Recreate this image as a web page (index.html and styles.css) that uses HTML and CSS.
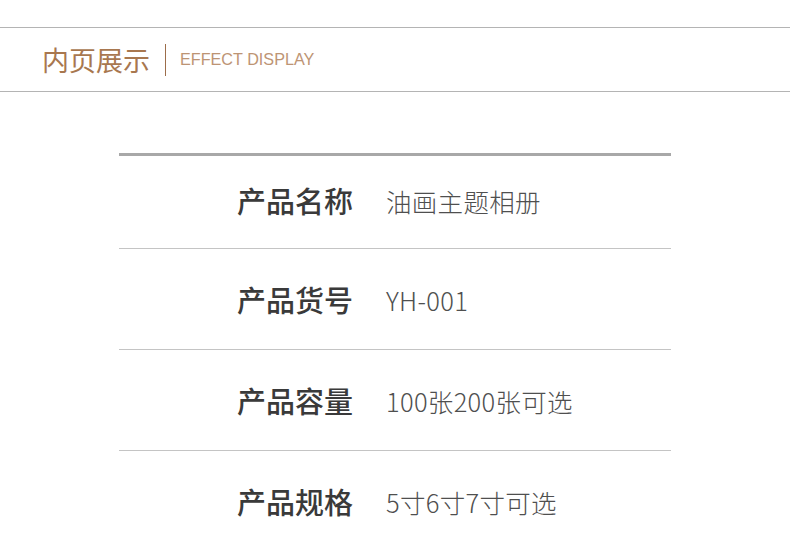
FILE: index.html
```html
<!DOCTYPE html>
<html lang="zh">
<head>
<meta charset="utf-8">
<link rel="stylesheet" href="styles.css">
</head>
<body>
<header class="section-head">
  <h2 class="title-cn">内页展示</h2>
  <span class="divider"></span>
  <span class="title-en">EFFECT DISPLAY</span>
</header>
<div class="spec">
  <div class="row first"><span class="label">产品名称</span><span class="value">油画主题相册</span></div>
  <div class="row"><span class="label">产品货号</span><span class="value">YH-001</span></div>
  <div class="row"><span class="label">产品容量</span><span class="value">100张200张可选</span></div>
  <div class="row last"><span class="label">产品规格</span><span class="value">5寸6寸7寸可选</span></div>
</div>
</body>
</html>
```

FILE: styles.css
```css
html, body {
  margin: 0;
  padding: 0;
  background: #ffffff;
  font-family: "Noto Sans CJK SC", "Noto Sans", sans-serif;
}
body {
  padding-top: 27px;
}
.section-head {
  display: flex;
  align-items: center;
  height: 63px;
  border-top: 1px solid #b4b4b4;
  border-bottom: 1px solid #b4b4b4;
  padding-left: 42px;
}
.title-cn {
  margin: 0;
  font-size: 27px;
  font-weight: 400;
  color: #a8774f;
  line-height: 1;
}
.divider {
  width: 1px;
  height: 32px;
  background: #9c6d4a;
  margin-left: 15px;
  margin-right: 14px;
}
.title-en {
  font-family: "Liberation Sans", Arial, sans-serif;
  font-size: 16.2px;
  color: #bd9474;
}
.spec {
  margin: 61px 0 0 119px;
  width: 552px;
  border-top: 3px solid #a8a8a8;
}
.row {
  display: flex;
  align-items: center;
  height: 40px;
  padding: 30px 0 30px 118px;
  border-bottom: 1px solid #c4c4c4;
}
.row.first {
  padding-top: 24px;
  padding-bottom: 28px;
}
.row.last {
  border-bottom: none;
}
.label {
  font-size: 29px;
  font-weight: 500;
  color: #3a3a3a;
  width: 149px;
  flex: none;
}
.value {
  font-size: 25.5px;
  font-weight: 300;
  color: #4f4f4f;
  letter-spacing: 0.3px;
}
```
